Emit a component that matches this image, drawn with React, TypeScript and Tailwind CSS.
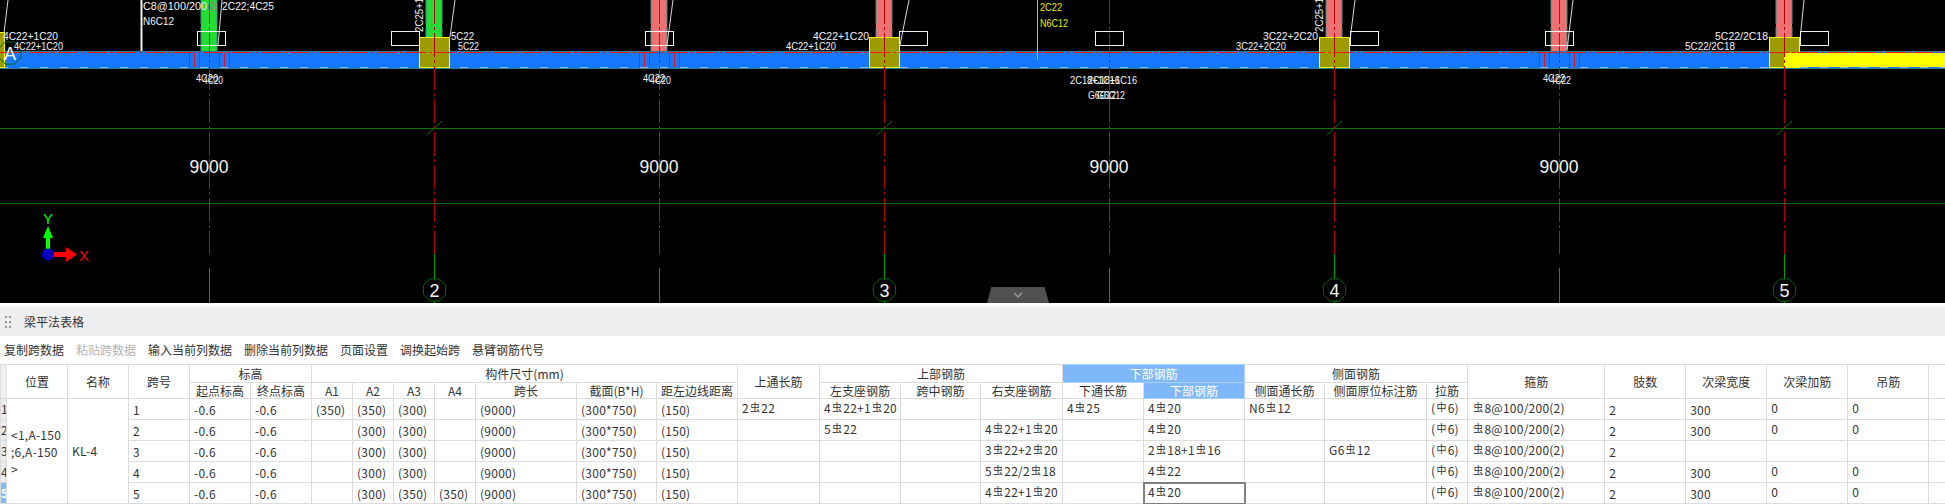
const FONT = "font-['Noto_Sans_CJK_SC','Liberation_Sans',sans-serif]";

const COLS = [
  "w-[6px]", "w-[61px]", "w-[61px]", "w-[61px]", "w-[61px]", "w-[61px]", "w-[41px]", "w-[41px]", "w-[41px]", "w-[41px]",
  "w-[101px]", "w-[80px]", "w-[81px]", "w-[82px]", "w-[81px]", "w-[80px]", "w-[82px]", "w-[81px]", "w-[101px]", "w-[80px]",
  "w-[102px]", "w-[41px]", "w-[137px]", "w-[81px]", "w-[81px]", "w-[81px]", "w-[81px]", "w-[17px]",
];

const TOOLS = ["复制跨数据", "粘贴跨数据", "输入当前列数据", "删除当前列数据", "页面设置", "调换起始跨", "悬臂钢筋代号"];

const STIRRUP = "虫8@100/200(2)";
const TIE = "(中6)";

// starts at the 跨号 column
const ROWS = [
  ["1", "-0.6", "-0.6", "(350)", "(350)", "(300)", "", "(9000)", "(300*750)", "(150)", "2虫22", "4虫22+1虫20", "", "", "4虫25", "4虫20", "N6虫12", "", TIE, STIRRUP, "2", "300", "0", "0", ""],
  ["2", "-0.6", "-0.6", "", "(300)", "(300)", "", "(9000)", "(300*750)", "(150)", "", "5虫22", "", "4虫22+1虫20", "", "4虫20", "", "", TIE, STIRRUP, "2", "300", "0", "0", ""],
  ["3", "-0.6", "-0.6", "", "(300)", "(300)", "", "(9000)", "(300*750)", "(150)", "", "", "", "3虫22+2虫20", "", "2虫18+1虫16", "", "G6虫12", TIE, STIRRUP, "2", "", "", "", ""],
  ["4", "-0.6", "-0.6", "", "(300)", "(300)", "", "(9000)", "(300*750)", "(150)", "", "", "", "5虫22/2虫18", "", "4虫22", "", "", TIE, STIRRUP, "2", "300", "0", "0", ""],
  ["5", "-0.6", "-0.6", "", "(300)", "(350)", "(350)", "(9000)", "(300*750)", "(150)", "", "", "", "4虫22+1虫20", "", "4虫20", "", "", TIE, STIRRUP, "2", "300", "0", "0", ""],
];

// indexes into a row whose text sits a little higher in the cell
const RAISED = [10, 11, 12, 13, 14, 15, 16, 17, 18, 19, 22, 23];

const Rebar = ({ text }: { text: string }) => (
  <>
    {text.split(/([虫中])/).map((part, i) =>
      part === "虫" || part === "中" ? (
        <span key={i} className="relative -top-[2px] mx-[1px] text-[10px]">
          {part}
        </span>
      ) : (
        <span key={i}>{part}</span>
      ),
    )}
  </>
);

const th = "border border-[#dcdcdc] p-0 text-center text-[12px] font-normal leading-none text-[#333]";
const active = "border border-[#a8d0fb] bg-[#7eb8fa] p-0 text-center text-[12px] font-normal leading-none text-white";

const TableHead = () => (
  <thead>
    <tr className="h-[18px]">
      <th rowSpan={2} className="border border-[#dcdcdc] bg-[#f0f0f0] p-0" />
      <th rowSpan={2} className={th}>位置</th>
      <th rowSpan={2} className={th}>名称</th>
      <th rowSpan={2} className={th}>跨号</th>
      <th colSpan={2} className={th}>标高</th>
      <th colSpan={7} className={th}>构件尺寸(mm)</th>
      <th rowSpan={2} className={th}>上通长筋</th>
      <th colSpan={3} className={th}>上部钢筋</th>
      <th colSpan={2} className={active}>下部钢筋</th>
      <th colSpan={3} className={th}>侧面钢筋</th>
      <th rowSpan={2} className={th}>箍筋</th>
      <th rowSpan={2} className={th}>肢数</th>
      <th rowSpan={2} className={th}>次梁宽度</th>
      <th rowSpan={2} className={th}>次梁加筋</th>
      <th rowSpan={2} className={th}>吊筋</th>
      <th rowSpan={2} className={th} />
    </tr>
    <tr className="h-[16px]">
      {["起点标高", "终点标高", "A1", "A2", "A3", "A4", "跨长", "截面(B*H)", "距左边线距离", "左支座钢筋", "跨中钢筋", "右支座钢筋", "下通长筋"].map((t) => (
        <th key={t} className={th}>{t}</th>
      ))}
      <th className={active}>下部钢筋</th>
      {["侧面通长筋", "侧面原位标注筋", "拉筋"].map((t) => (
        <th key={t} className={th}>{t}</th>
      ))}
    </tr>
  </thead>
);

const BeamTable = () => (
  <table className="w-[1945px] table-fixed border-collapse">
    <colgroup>
      {COLS.map((c, i) => (
        <col key={i} className={c} />
      ))}
    </colgroup>
    <TableHead />
    <tbody>
      {ROWS.map((row, r) => (
        <tr key={r} className="h-[21px]">
          <td className={`overflow-hidden whitespace-nowrap border border-[#dcdcdc] p-0 text-[12px] leading-none ${r === 4 ? "bg-[#7eb8fa] font-bold text-white" : "bg-[#ececec] text-[#333]"}`}>
            {r + 1}
          </td>
          {r === 0 && (
            <td rowSpan={5} className="border border-[#dcdcdc] p-0 pl-[4px] text-[12px] leading-[17px] tracking-[0.25px] text-[#333]">
              <div>&lt;1,A-150</div>
              <div>;6,A-150</div>
              <div>&gt;</div>
            </td>
          )}
          {r === 0 && (
            <td rowSpan={5} className="border border-[#dcdcdc] p-0 pl-[4px] text-[12px] tracking-[0.25px] text-[#333]">KL-4</td>
          )}
          {row.map((cell, c) => (
            <td
              key={c}
              className={`overflow-hidden whitespace-nowrap border border-[#dcdcdc] px-[4px] text-[12px] leading-none tracking-[0.25px] text-[#333] ${RAISED.includes(c) ? "pb-[2px] pt-0" : "pb-0 pt-[2px]"} ${r === 4 && c === 15 ? "outline-2 -outline-offset-1 outline-[#808080]" : ""}`}
            >
              <Rebar text={cell} />
            </td>
          ))}
        </tr>
      ))}
    </tbody>
  </table>
);

const AXES = [209, 434, 659, 884, 1109, 1334, 1559, 1784];
const NAMED: [number, string][] = [[434, "2"], [884, "3"], [1334, "4"], [1784, "5"]];
const PILLARS: [number, string][] = [[209, "#22dd33"], [434, "#22dd33"], [659, "#ee7070"], [884, "#ee7070"], [1334, "#ee7070"], [1559, "#ee7070"], [1784, "#ee7070"]];

// x, baseline, width
const LABELS: [string, number, number, number][] = [
  ["4C22+1C20", 3, 40, 55], ["4C22+1C20", 14, 50, 49],
  ["C8@100/200", 143, 10, 64], ["2C22;4C25", 222, 10, 52], ["N6C12", 143, 25, 31],
  ["4C20", 196, 82, 22], ["4C20", 203, 84, 20],
  ["5C22", 451, 40, 23], ["5C22", 458, 50, 21],
  ["4C22", 643, 82, 22], ["4C20", 650, 84, 21],
  ["4C22+1C20", 813, 40, 56], ["4C22+1C20", 786, 50, 50],
  ["2C18+1C16", 1070, 84, 50], ["2C18+1C16", 1088, 84, 49],
  ["G6C12", 1088, 99, 28], ["G6C12", 1097, 99, 28],
  ["3C22+2C20", 1263, 40, 55], ["3C22+2C20", 1236, 50, 50],
  ["4C22", 1543, 82, 22], ["4C22", 1550, 84, 21],
  ["5C22/2C18", 1715, 40, 53], ["5C22/2C18", 1685, 50, 50],
];

const LEADERS = [
  [8, 0, 4, 33], [222, 0, 218, 45], [455, 0, 450, 37], [673, 0, 667, 45],
  [909, 0, 900, 45], [1355, 0, 1350, 40], [1573, 0, 1567, 50], [1804, 0, 1800, 40],
];
const BOXES = [197, 391, 645, 899, 1095, 1350, 1545, 1800];

const octagon = (cx: number, cy: number, r: number) =>
  Array.from({ length: 8 }, (_, i) => {
    const a = Math.PI / 8 + (i * Math.PI) / 4;
    return `${cx + r * Math.cos(a)},${cy + r * Math.sin(a)}`;
  }).join(" ");

const CadText = ({ t, x, y, w, fill = "#f4f4f4" }: { t: string; x: number; y: number; w: number; fill?: string }) => (
  <text x={x} y={y} fontSize={11} fill={fill} textLength={w} lengthAdjust="spacingAndGlyphs" fontFamily="'Liberation Sans', sans-serif">
    {t}
  </text>
);

const Drawing = () => (
  <svg width={1945} height={303} viewBox="0 0 1945 303" className="block">
    {/* pillars */}
    {PILLARS.map(([x, fill]) => (
      <g key={x}>
        <rect x={x - 8} y={0} width={16} height={52} fill={fill} />
        <path d={`M${x - 8} 0V52M${x + 8} 0V52`} stroke="#3d8f8f" strokeWidth={1} strokeDasharray="24 3" />
      </g>
    ))}

    {/* beam */}
    <rect x={0} y={51} width={1945} height={18} fill="#1677ff" />
    <rect x={1784} y={53} width={161} height={14} fill="#ffff00" />
    <path d="M0 51.5H1945M0 68.5H1945" stroke="#2f7f8f" />
    <path d="M0 67.5H1945" stroke="#8fb4ea" strokeDasharray="8 12" />

    {/* stirrups */}
    {[209, 659, 1559].map((x) =>
      [-20, -15, -10, 10, 15, 20].map((d) => (
        <path key={x + d} d={`M${x + d + 0.5} 53V67`} stroke="#ee1111" />
      )),
    )}

    {/* supports */}
    <rect x={-2} y={32.5} width={6.5} height={35} fill="#9c9c00" stroke="#ffff00" />
    {[434, 884, 1334, 1784].map((x) => (
      <rect key={x} x={x - 14.5} y={37.5} width={30} height={30} fill="#9c9c00" stroke="#ffff00" />
    ))}
    <rect x={1784} y={53} width={15} height={14} fill="#ffff00" />

    {/* grid lines */}
    <path d="M0 128.5H1945M0 203.5H1945" stroke="#007a00" />
    <path d="M0 52.5H1945" stroke="#ff1010" strokeWidth={1} strokeDasharray="20 3 3 3" />
    {AXES.map((x, i) => (
      <g key={x}>
        <path d={`M${x + 0.5} 0V254`} stroke={i % 2 ? "#b00000" : "#e00000"} strokeDasharray="24 3 3 3" />
        <path d={`M${x + 0.5} ${i % 2 ? 254 : 268}V303`} stroke="#00a000" />
      </g>
    ))}
    {NAMED.map(([x, n]) => (
      <g key={x}>
        <path d={`M${x - 7} 135L${x + 8} 121`} stroke="#007a00" />
        <polygon points={octagon(x + 0.5, 290, 12)} fill="#000" stroke="#006a00" />
        <text x={x - 4.5} y={297} fontSize={19} fill="#f4f4f4" textLength={10} lengthAdjust="spacingAndGlyphs" fontFamily="'Liberation Sans', sans-serif">
          {n}
        </text>
      </g>
    ))}

    {/* axis A bubble */}
    <polygon points={octagon(10, 53, 12)} fill="none" stroke="#006a00" />
    <text x={4} y={60} fontSize={18} fill="#f4f4f4" textLength={12} lengthAdjust="spacingAndGlyphs" fontFamily="'Liberation Sans', sans-serif">A</text>

    {/* leaders and section boxes */}
    {LEADERS.map(([a, b, c, d]) => (
      <path key={a} d={`M${a} ${b}L${c} ${d}`} stroke="#d8d8d8" />
    ))}
    <path d="M141.5 0V51" stroke="#f0f0f0" strokeWidth={2} />
    <path d="M1037.5 0V60" stroke="#c8c800" />
    {BOXES.map((x) => (
      <rect key={x} x={x + 0.5} y={31.5} width={28} height={14} fill="none" stroke="#f0f0f0" />
    ))}

    {/* annotations */}
    {LABELS.map(([t, x, y, w]) => (
      <CadText key={`${t}${x}`} t={t} x={x} y={y} w={w} />
    ))}
    <CadText t="(2)" x={208} y={10} w={9} fill="#d040d0" />
    <CadText t="2C22" x={1040} y={11} w={22} fill="#e8e800" />
    <CadText t="N6C12" x={1040} y={27} w={28} fill="#e8e800" />
    {[423, 1323].map((x) => (
      <text key={x} transform={`translate(${x} 32) rotate(-90)`} fontSize={11} fill="#f4f4f4" textLength={52} lengthAdjust="spacingAndGlyphs" fontFamily="'Liberation Sans', sans-serif">
        2C25+1C22
      </text>
    ))}

    {/* dimensions */}
    {[209, 659, 1109, 1559].map((x) => (
      <text key={x} x={x - 19.5} y={173} fontSize={19} fill="#f4f4f4" textLength={39} lengthAdjust="spacingAndGlyphs" fontFamily="'Liberation Sans', sans-serif">
        9000
      </text>
    ))}

    {/* ucs marker */}
    <path d="M46 254V238H43L48 226L53 238H50V254Z" fill="#00ff00" />
    <path d="M48 252H66V247L77 254.500L66 262V257H48Z" fill="#ff0000" />
    <circle cx={48} cy={254.5} r={6} fill="#0000c0" />
    <text x={43} y={224} fontSize={15} fill="#00ff00" textLength={10} lengthAdjust="spacingAndGlyphs" fontFamily="'Liberation Sans', sans-serif">Y</text>
    <text x={79} y={261} fontSize={15} fill="#ff0000" textLength={10} lengthAdjust="spacingAndGlyphs" fontFamily="'Liberation Sans', sans-serif">X</text>
  </svg>
);

export default function App() {
  return (
    <div className={`flex h-[504px] w-[1945px] flex-col overflow-hidden bg-white ${FONT}`}>
      <div className="relative h-[303px] shrink-0 bg-black">
        <Drawing />
        <div className="absolute bottom-0 left-[987px] flex h-[16px] w-[62px] items-center justify-center bg-[#505050] [clip-path:polygon(7%_0,93%_0,100%_100%,0_100%)]">
          <svg width="10" height="6" viewBox="0 0 10 6" fill="none" stroke="#a8a8a8" strokeWidth="1.200">
            <path d="M1 1L5 5L9 1" />
          </svg>
        </div>
      </div>
      <div className="h-[4px] shrink-0 bg-white" />
      <div className="flex h-[29px] shrink-0 items-center gap-[13px] bg-[#eeeef0] pl-[5px]">
        <div className="grid grid-cols-2 gap-x-[2px] gap-y-[3px]">
          {[0, 1, 2, 3, 4, 5].map((i) => (
            <div key={i} className="h-[2px] w-[2px] bg-[#999]" />
          ))}
        </div>
        <span className="text-[12px] text-[#333]">梁平法表格</span>
      </div>
      <div className="flex h-[28px] shrink-0 items-center gap-[12px] pl-[4px] text-[12px] text-[#333]">
        {TOOLS.map((t) => (
          <span key={t} className={t === "粘贴跨数据" ? "text-[#b4b4b4]" : ""}>
            {t}
          </span>
        ))}
      </div>
      <BeamTable />
    </div>
  );
}
